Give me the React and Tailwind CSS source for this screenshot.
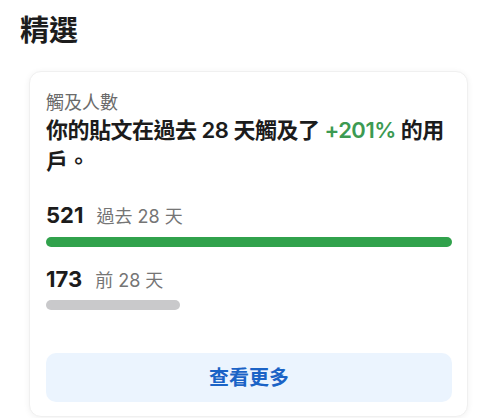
export default function App() {
  const font = { fontFamily: 'Inter, "Noto Sans CJK TC", sans-serif' }
  return (
    <div className="w-[480px] h-[418px] bg-white overflow-hidden" style={font}>
      <h1 className="pt-[11px] px-5 text-[29px] leading-[39px] font-bold text-[#1c1c1c]">精選</h1>

      <div className="mt-[21px] ml-[29px] w-[439px] rounded-[12px] border border-[#f0f0f0] bg-white shadow-[0_1px_6px_rgba(0,0,0,0.06)] pt-[19px] pl-[16px] pr-[15px] pb-[14px]">
        <div className="text-[18px] leading-[24px] text-[#6b6b6b]">觸及人數</div>
        <p className="text-[22px] leading-[31px] font-semibold tracking-[-0.5px] text-[#1c1c1c]">
          你的貼文在過去 28 天觸及了 <span className="text-[#3c9a52]">+201%</span> 的用戶。
        </p>

        <div className="mt-[24px] flex items-baseline gap-[13px] leading-[28px]">
          <span className="text-[22px] font-bold text-[#1c1c1c]">521</span>
          <span className="text-[18px] text-[#757575]">過去 28 天</span>
        </div>
        <div className="mt-[6px] h-[10px] w-full rounded-full bg-[#31a24c]" />

        <div className="mt-[18px] flex items-baseline gap-[13px] leading-[28px]">
          <span className="text-[22px] font-bold text-[#1c1c1c]">173</span>
          <span className="text-[18px] text-[#757575]">前 28 天</span>
        </div>
        <div className="mt-[5px] h-[10px] w-[134px] rounded-full bg-[#c9c9cb]" />

        <button className="mt-[43px] h-[49px] w-full rounded-[10px] bg-[#ebf4fe] text-[20px] font-bold text-[#1b63c6]">
          查看更多
        </button>
      </div>
    </div>
  )
}
